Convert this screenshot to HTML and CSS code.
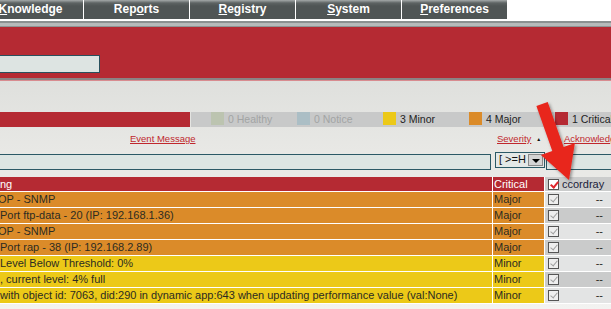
FILE: index.html
```html
<!DOCTYPE html>
<html lang="en">
<head>
    <meta charset="UTF-8">
    <meta name="viewport" content="width=device-width, initial-scale=1.0">
    <title>Event Console</title>
    <link rel="stylesheet" href="styles.css">
</head>
<body>
    <div class="topnav">
        <a class="tab"><u>K</u>nowledge</a>
        <a class="tab">Rep<u>o</u>rts</a>
        <a class="tab"><u>R</u>egistry</a>
        <a class="tab"><u>S</u>ystem</a>
        <a class="tab"><u>P</u>references</a>
    </div>
    <div class="nav-rule"></div>
    <div class="banner">
        <input class="banner-search" type="text">
    </div>
    <div class="banner-rule"></div>

    <div class="content">
        <div class="legend">
            <div class="legend-fill"></div>
            <div class="legend-items">
                <div class="legend-item muted"><span class="swatch healthy"></span>0 Healthy</div>
                <div class="legend-item muted"><span class="swatch notice"></span>0 Notice</div>
                <div class="legend-item"><span class="swatch minor"></span>3 Minor</div>
                <div class="legend-item"><span class="swatch major"></span>4 Major</div>
                <div class="legend-item"><span class="swatch critical"></span>1 Critical</div>
            </div>
        </div>

        <div class="cols sort-row">
            <div class="col-msg"><a href="#">Event Message</a></div>
            <div class="col-sev"><a href="#">Severity</a><span class="sort-arrow">&#9650;</span></div>
            <div class="col-ack"><a href="#">Acknowledged</a></div>
        </div>

        <div class="cols filter-row">
            <div class="col-msg"><input class="filter-msg" type="text"></div>
            <div class="col-sev">
                <div class="filter-sev">[ &gt;=H<span class="drop"></span></div>
            </div>
            <div class="col-ack"><input class="filter-ack" type="text"></div>
        </div>

        <div class="events">
            <div class="cols ev head">
                <div class="col-msg">ng</div>
                <div class="col-sev">Critical</div>
                <div class="col-ack"><span class="check on"></span>ccordray</div>
            </div>
            <div class="cols ev major">
                <div class="col-msg shift">OP - SNMP</div>
                <div class="col-sev">Major</div>
                <div class="col-ack"><span class="check"></span><span class="who">--</span></div>
            </div>
            <div class="cols ev major alt">
                <div class="col-msg"> Port ftp-data - 20 (IP: 192.168.1.36)</div>
                <div class="col-sev">Major</div>
                <div class="col-ack"><span class="check"></span><span class="who">--</span></div>
            </div>
            <div class="cols ev major">
                <div class="col-msg shift">OP - SNMP</div>
                <div class="col-sev">Major</div>
                <div class="col-ack"><span class="check"></span><span class="who">--</span></div>
            </div>
            <div class="cols ev major alt">
                <div class="col-msg"> Port rap - 38 (IP: 192.168.2.89)</div>
                <div class="col-sev">Major</div>
                <div class="col-ack"><span class="check"></span><span class="who">--</span></div>
            </div>
            <div class="cols ev minor">
                <div class="col-msg">Level Below Threshold: 0%</div>
                <div class="col-sev">Minor</div>
                <div class="col-ack"><span class="check"></span><span class="who">--</span></div>
            </div>
            <div class="cols ev minor alt">
                <div class="col-msg">, current level: 4% full</div>
                <div class="col-sev">Minor</div>
                <div class="col-ack"><span class="check"></span><span class="who">--</span></div>
            </div>
            <div class="cols ev minor">
                <div class="col-msg">with object id: 7063, did:290 in dynamic app:643 when updating performance value (val:None)</div>
                <div class="col-sev">Minor</div>
                <div class="col-ack"><span class="check"></span><span class="who">--</span></div>
            </div>
        </div>
    </div>

    <!-- callout arrow drawn over the page -->
    <svg class="callout" width="611" height="309" viewBox="0 0 611 309">
        <defs>
            <filter id="shade" x="-30%" y="-20%" width="170%" height="150%">
                <feDropShadow dx="1.5" dy="1.5" stdDeviation="1.6" flood-color="#000" flood-opacity="0.4"/>
            </filter>
        </defs>
        <polygon points="536.4,106 547.7,102 563.6,146.9 574.9,142.9 569,180 540.9,154.9 552.3,150.9"
                 fill="#e8251d" filter="url(#shade)"/>
    </svg>
</body>
</html>
```

FILE: styles.css
```css
body {
    margin: 0;
    padding: 0;
    width: 611px;
    height: 309px;
    overflow: hidden;
    position: relative;
    background-color: #fff;
    font-family: "Liberation Sans", Arial, sans-serif;
}

/* top navigation */
.topnav {
    display: flex;
    height: 19px;
    margin-left: -22px;
}
.tab {
    width: 105px;
    height: 17px;
    padding-top: 2px;
    border-right: 1px solid #fff;
    background: linear-gradient(to bottom, #a4a9a9 0, #5d6363 3px, #4f5555 6px, #4f5555 100%);
    color: #fff;
    font-size: 12px;
    font-weight: bold;
    line-height: 15px;
    text-align: center;
    cursor: pointer;
}
.nav-rule {
    height: 8px;
    background: linear-gradient(to bottom, #fff 0, #fff 2px, #8b9090 2px, #8b9090 4px, #b6baba 4px, #b6baba 7px, #8f9494 7px);
}

/* red banner */
.banner {
    height: 51px;
    background-color: #b52a33;
    display: flex;
    align-items: flex-end;
}
.banner-search {
    box-sizing: border-box;
    width: 104px;
    height: 18px;
    margin: 0 0 5px -4px;
    border: 1px solid #28505d;
    background-color: #dde4e2;
    padding: 0;
}
.banner-rule {
    height: 3px;
    background: linear-gradient(to bottom, #8b8384 0, #8b8384 2px, #d88c90 2px);
}

.content {
    height: 228px;
    background: linear-gradient(to bottom, #dfe0dd 0, #e8e8e5 70px, #eeeeec 200px, #f3f3f1 100%);
    padding-top: 31px;
    box-sizing: border-box;
}

/* severity legend */
.legend {
    display: flex;
    height: 15px;
}
.legend-fill {
    width: 190px;
    background-color: #b52a33;
    margin-right: 1px;
}
.legend-items {
    flex: 1;
    display: flex;
    padding-left: 20px;
    background-color: #c8c9c9;
    overflow: hidden;
    white-space: nowrap;
}
.legend-item {
    flex: none;
    width: 86px;
    display: flex;
    font-size: 10.5px;
    line-height: 14px;
    color: #222;
}
.legend-item.muted {
    color: #a2a4a4;
}
.swatch {
    width: 13px;
    height: 13px;
    margin-right: 4px;
}
.swatch.healthy { background-color: #bcc4b0; }
.swatch.notice { background-color: #abbec5; }
.swatch.minor { background-color: #ecc918; }
.swatch.major { background-color: #db8b29; }
.swatch.critical { background-color: #b52a33; }

/* shared column grid */
.cols {
    display: grid;
    grid-template-columns: 492px 51px 1fr;
    column-gap: 1px;
}

.sort-row {
    height: 25px;
    padding-top: 6px;
    box-sizing: border-box;
    font-size: 9.5px;
    line-height: 12px;
}
.sort-row a {
    color: #c0272d;
    text-decoration: underline;
}
.sort-row .col-msg {
    padding-left: 130px;
}
.sort-row .col-sev {
    padding-left: 4px;
    white-space: nowrap;
}
.sort-row .col-ack {
    padding-left: 19px;
    white-space: nowrap;
    overflow: hidden;
}
.sort-arrow {
    font-size: 5px;
    color: #111;
    margin-left: 5px;
    vertical-align: 1px;
}

.filter-row {
    height: 25px;
}
.filter-row input {
    box-sizing: border-box;
    height: 16px;
    padding: 0;
    border: 1px solid #2b5966;
    background-color: #dde5e3;
}
.filter-msg {
    width: 495px;
    margin-left: -4px;
}
.filter-ack {
    width: 80px;
    margin-left: 1px;
}
.filter-sev {
    box-sizing: border-box;
    width: 50px;
    height: 16px;
    margin-left: 1px;
    border: 1px solid #2b5966;
    background-color: #e4e8e7;
    font-size: 11px;
    line-height: 13px;
    padding-left: 3px;
    display: flex;
    position: relative;
    color: #111;
}
.drop {
    position: absolute;
    right: 1px;
    top: 1px;
    width: 15px;
    height: 12px;
    background-color: #d4d4d4;
    border: 1px solid #8a8a8a;
    box-sizing: border-box;
}
.drop::after {
    content: "";
    position: absolute;
    left: 3px;
    top: 4px;
    border-left: 4px solid transparent;
    border-right: 4px solid transparent;
    border-top: 4px solid #000;
}

/* events table */
.events {
    background-color: #fff;
    overflow: hidden;
}
.ev {
    height: 15px;
    border-bottom: 1px solid #fff;
    font-size: 11px;
    line-height: 15px;
    color: #2b2b22;
    white-space: nowrap;
}
.ev > div {
    overflow: hidden;
}
.ev.head {
    height: 14px;
    line-height: 14px;
    color: #fff;
}
.ev.head .col-msg,
.ev.head .col-sev {
    background-color: #b52a33;
}
.ev.head .col-ack {
    background-color: #cbcccc;
    color: #1c1c3a;
}
.ev.major .col-msg,
.ev.major .col-sev {
    background-color: #db8b29;
}
.ev.minor .col-msg,
.ev.minor .col-sev {
    background-color: #ecc918;
}
.col-sev {
    padding-left: 1px;
}
.ev .col-msg.shift {
    text-indent: -2px;
}
.ev .col-ack {
    display: flex;
    align-items: center;
    padding-left: 3px;
    padding-right: 8px;
    background-color: #e3e4e4;
}
.ev.alt .col-ack {
    background-color: #cacbcb;
}
.check {
    box-sizing: border-box;
    width: 11px;
    height: 11px;
    border: 1px solid #555;
    background-color: #eeeeee;
    position: relative;
    flex: none;
}
.check::after {
    content: "";
    position: absolute;
    left: 3px;
    top: 0px;
    width: 3px;
    height: 6px;
    border-right: 1px solid #a0a0a0;
    border-bottom: 1px solid #a0a0a0;
    transform: rotate(40deg);
}
.check.on {
    background-color: #fff;
    margin-right: 3px;
}
.check.on::after {
    border-color: #e0262c;
    border-width: 0 2px 2px 0;
}
.who {
    margin-left: auto;
}

.callout {
    position: absolute;
    top: 0;
    left: 0;
    pointer-events: none;
}
```
